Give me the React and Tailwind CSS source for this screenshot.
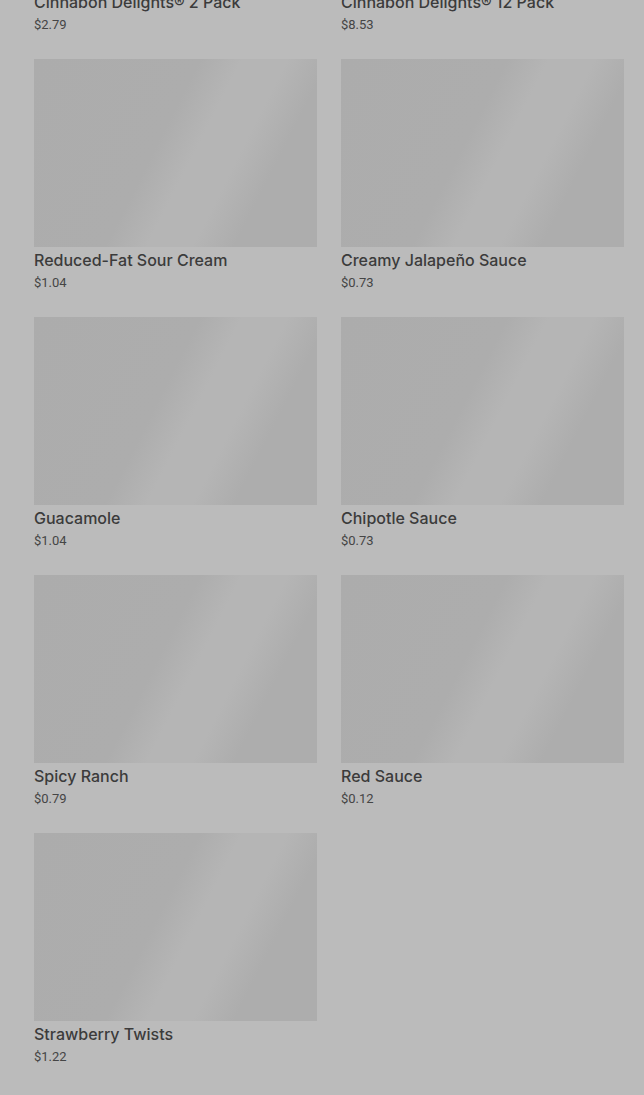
const items = [
    { name: "Cinnabon Delights® 2 Pack", price: "$2.79" },
    { name: "Cinnabon Delights® 12 Pack", price: "$8.53" },
    { name: "Reduced-Fat Sour Cream", price: "$1.04" },
    { name: "Creamy Jalapeño Sauce", price: "$0.73" },
    { name: "Guacamole", price: "$1.04" },
    { name: "Chipotle Sauce", price: "$0.73" },
    { name: "Spicy Ranch", price: "$0.79" },
    { name: "Red Sauce", price: "$0.12" },
    { name: "Strawberry Twists", price: "$1.22" }
];

const ProductCard = ({ item }) => (
    <div className="flex flex-col">
        <div className="h-[188px] w-full bg-[linear-gradient(117deg,#acacac_0%,#adadad_44%,#b5b5b5_55%,#b5b5b5_67%,#adadad_78%,#adadad_100%)]" />
        <p className="font-['Inter',sans-serif] text-base leading-[26px] font-medium text-[#3b3b3b]">
            {item.name}
        </p>
        <p className="text-[13px] leading-5 text-[#454545]">
            {item.price}
        </p>
    </div>
);

const App = () => {
    return (
        <div className="min-h-[1095px] overflow-hidden bg-[#bbbbbb] font-['Roboto',sans-serif]">
            <div className="-mt-[199px] grid grid-cols-[283px_283px] gap-x-6 gap-y-6 pb-[28px] pl-[34px]">
                {items.map((item) => (
                    <ProductCard key={item.name} item={item} />
                ))}
            </div>
        </div>
    );
};

export default App;
